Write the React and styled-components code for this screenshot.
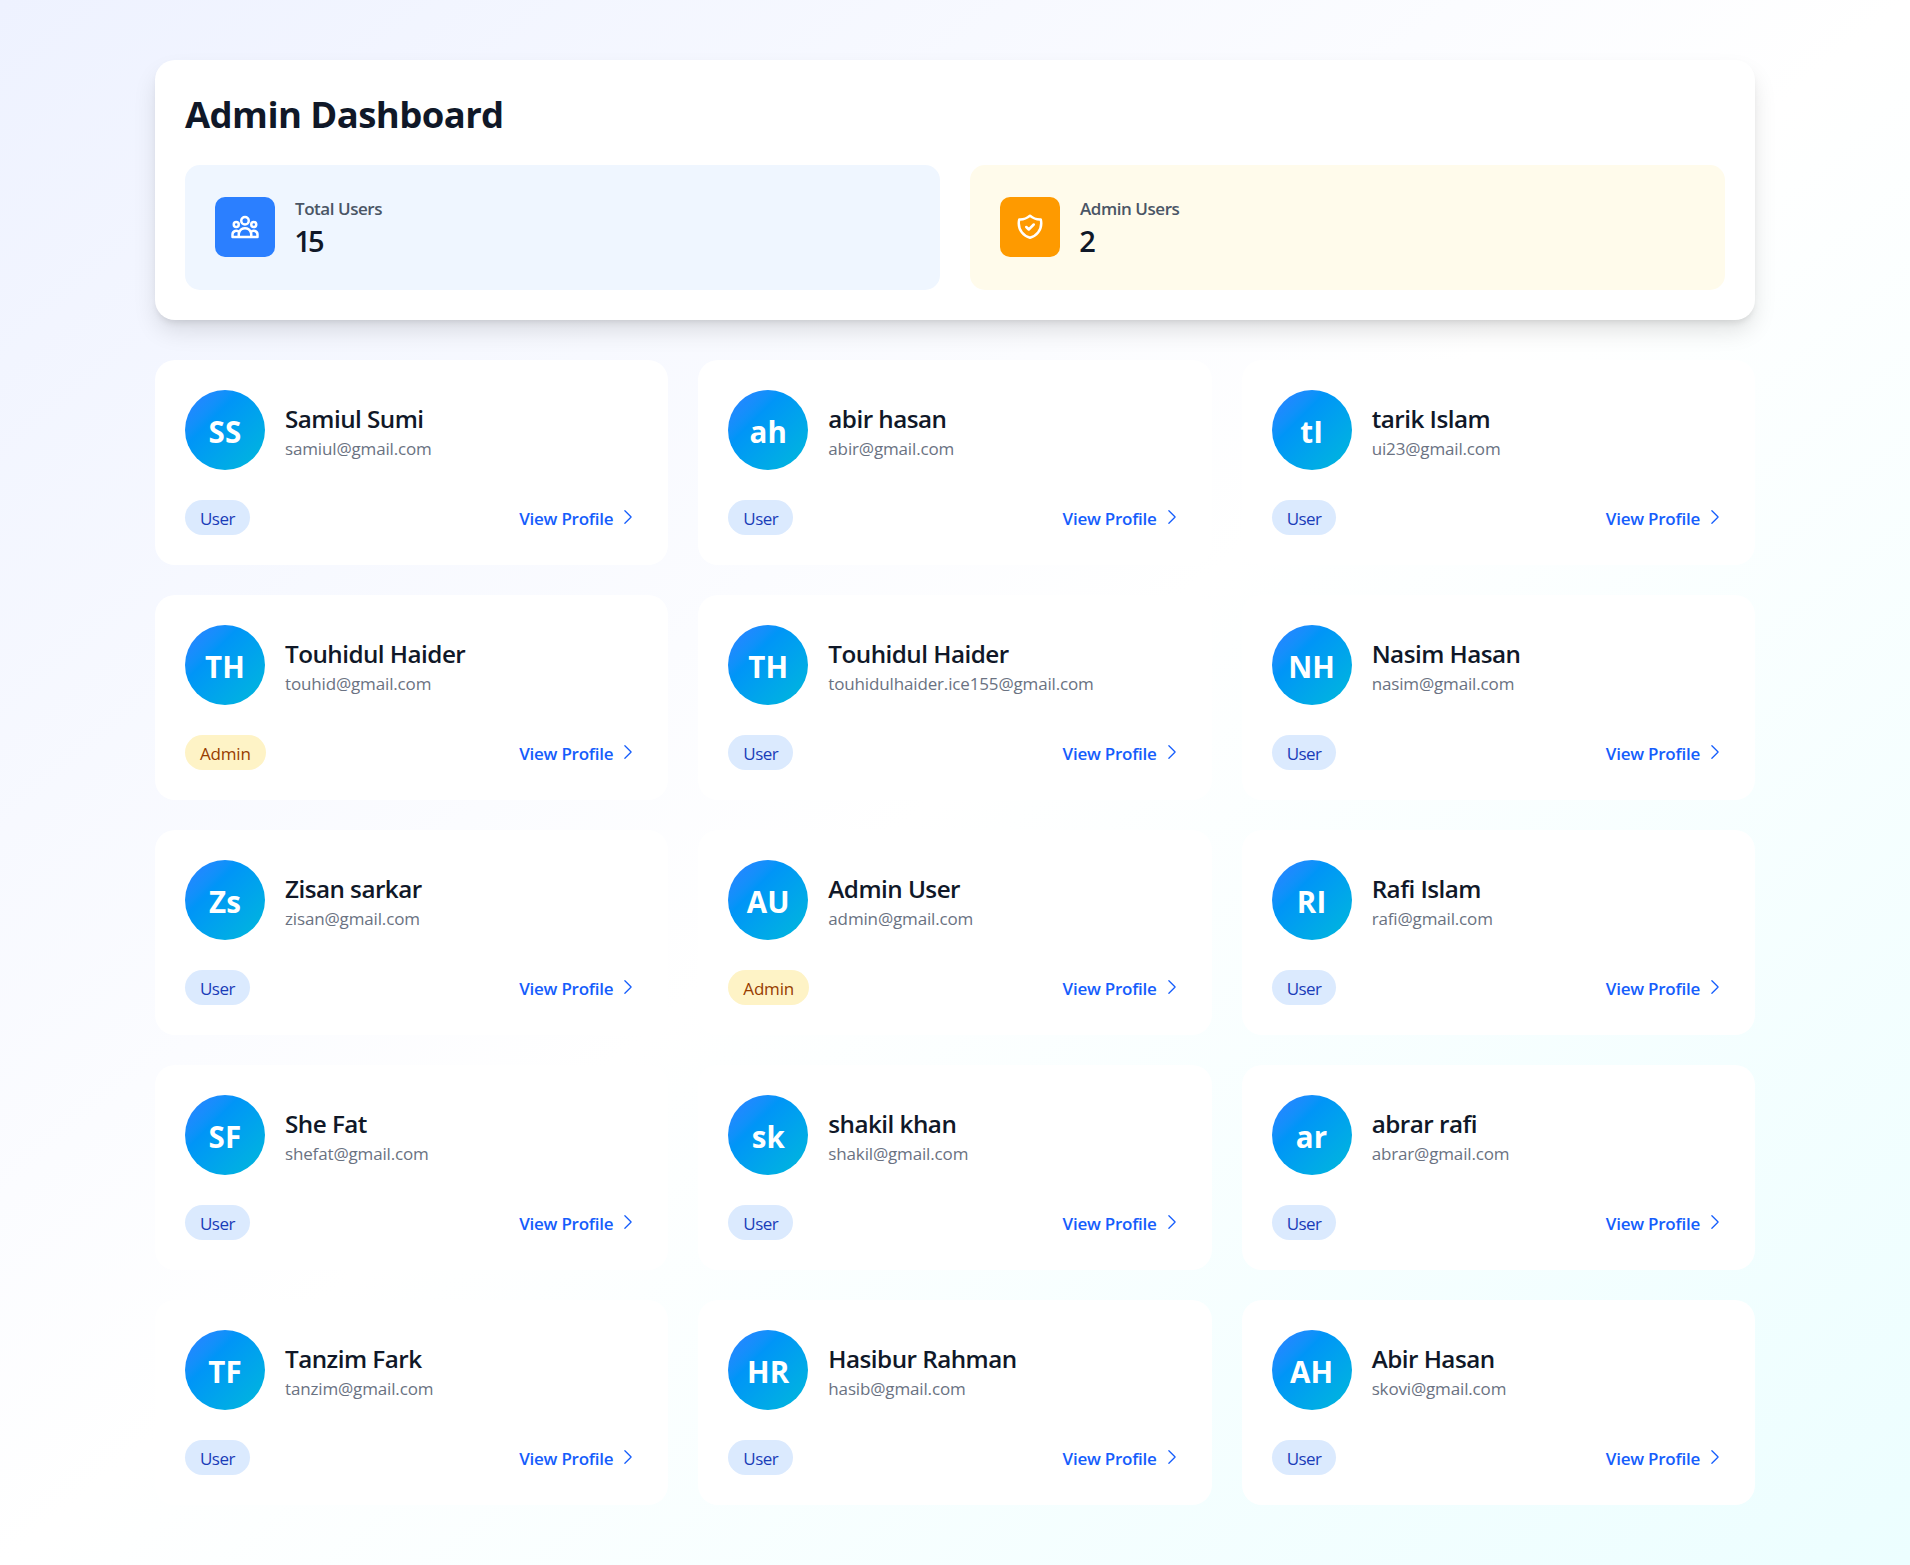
import React from "react";
import styled, { createGlobalStyle, css } from "styled-components";
import { HiOutlineUserGroup, HiOutlineShieldCheck } from "react-icons/hi";

const GlobalStyle = createGlobalStyle`
  *, *::before, *::after { box-sizing: border-box; }
  body {
    margin: 0;
    font-family: "Segoe UI", "Open Sans", "Noto Sans", sans-serif;
    color: #101828;
  }
  h1, h3, p { margin: 0; }
`;

const Page = styled.main`
  min-height: 1565px;
  padding: 60px 0;
  background: linear-gradient(to bottom right in oklab, #eef2ff 0%, #ffffff 50%, #ecfeff 100%);
`;

const Container = styled.div`
  width: 1600px;
  margin: 0 auto;
  display: flex;
  flex-direction: column;
  gap: 40px;
`;

const Header = styled.header`
  padding: 30px;
  border-radius: 20px;
  background: #fff;
  box-shadow: 0 12.5px 25px -2.5px rgba(0, 0, 0, 0.12), 0 5px 7.5px -3.75px rgba(0, 0, 0, 0.1);
`;

const Title = styled.h1`
  padding-top: 2.4px;
  margin-bottom: 27.6px;
  font-size: 36.5px;
  line-height: 45px;
  font-weight: 700;
  letter-spacing: -0.58px;
`;

const Stats = styled.section`
  display: grid;
  grid-template-columns: 1fr 1fr;
  gap: 30px;
`;

const tones = {
  blue: css`
    --surface: #eff6ff;
    --accent: #2b7fff;
  `,
  amber: css`
    --surface: #fffbeb;
    --accent: #fe9a00;
  `,
};

const StatCard = styled.div`
  ${(p) => tones[p.$tone]}
  display: flex;
  align-items: center;
  gap: 20px;
  height: 125px;
  padding: 0 30px;
  border-radius: 15px;
  background: var(--surface);
`;

const StatIcon = styled.span`
  display: grid;
  place-items: center;
  width: 60px;
  height: 60px;
  margin-bottom: 1px;
  border-radius: 10px;
  color: #fff;
  background: var(--accent);
`;

const TextStack = styled.div`
  padding-top: 1.5px;
  margin-bottom: -1.5px;
`;

const StatLabel = styled.p`
  font-size: 17px;
  line-height: 25px;
  font-weight: 600;
  letter-spacing: -0.45px;
  color: #4a5565;
`;

const StatValue = styled.p`
  font-size: 29px;
  line-height: 40px;
  font-weight: 600;
  letter-spacing: -2.8px;
  text-indent: -0.8px;
`;

const UserGrid = styled.section`
  display: grid;
  grid-template-columns: repeat(3, 1fr);
  gap: 30px;
`;

const Card = styled.article`
  position: relative;
  padding: 30px;
  border-radius: 20px;
  background: #fff;
`;

const Identity = styled.div`
  display: flex;
  align-items: center;
  gap: 20px;
  margin-bottom: 30px;
`;

const Avatar = styled.div`
  display: grid;
  place-items: center;
  width: 80px;
  height: 80px;
  padding-top: 4px;
  border-radius: 50%;
  color: #fff;
  font-size: 29.5px;
  line-height: 40px;
  font-weight: 700;
  letter-spacing: 0.2px;
  background: linear-gradient(
    to bottom right in oklab,
    oklch(62.3% 0.214 259.815),
    oklch(71.5% 0.143 215.221)
  );
`;

const Name = styled.h3`
  font-size: 24.25px;
  line-height: 35px;
  font-weight: 600;
  letter-spacing: -0.53px;
`;

const Email = styled.p`
  font-size: 17px;
  line-height: 25px;
  letter-spacing: -0.15px;
  color: #6a7282;
`;

const CardFooter = styled.div`
  display: flex;
  align-items: center;
  justify-content: space-between;
`;

const Badge = styled.span`
  padding: 6.4px 15px 3.6px;
  border-radius: 999px;
  font-size: 17px;
  line-height: 25px;
  letter-spacing: ${(p) => (p.$admin ? "-0.18px" : "-0.55px")};
  color: ${(p) => (p.$admin ? "#973c00" : "#193cb8")};
  background: ${(p) => (p.$admin ? "#fef3c6" : "#dbeafe")};
`;

const ProfileLink = styled.a`
  display: flex;
  align-items: center;
  gap: 5px;
  color: #155dfc;
`;

const LinkText = styled.span`
  padding-top: 2.8px;
  font-size: 17px;
  line-height: 25px;
  font-weight: 600;
  letter-spacing: -0.24px;
`;

const ChevronIcon = styled.svg`
  width: 20px;
  height: 20px;
  fill: none;
  stroke: currentColor;
  stroke-width: 1.5;
  stroke-linecap: round;
  stroke-linejoin: round;
`;

const users = [
  ["Samiul Sumi", "samiul@gmail.com"],
  ["abir hasan", "abir@gmail.com"],
  ["tarik Islam", "ui23@gmail.com"],
  ["Touhidul Haider", "touhid@gmail.com", true],
  ["Touhidul Haider", "touhidulhaider.ice155@gmail.com"],
  ["Nasim Hasan", "nasim@gmail.com"],
  ["Zisan sarkar", "zisan@gmail.com"],
  ["Admin User", "admin@gmail.com", true],
  ["Rafi Islam", "rafi@gmail.com"],
  ["She Fat", "shefat@gmail.com"],
  ["shakil khan", "shakil@gmail.com"],
  ["abrar rafi", "abrar@gmail.com"],
  ["Tanzim Fark", "tanzim@gmail.com"],
  ["Hasibur Rahman", "hasib@gmail.com"],
  ["Abir Hasan", "skovi@gmail.com"],
].map(([name, email, admin = false]) => ({ name, email, admin }));

const initials = (name) => name.split(" ").map((part) => part[0]).join("");

function Stat({ tone, icon: Icon, label, value }) {
  return (
    <StatCard $tone={tone}>
      <StatIcon><Icon size={30} /></StatIcon>
      <TextStack>
        <StatLabel>{label}</StatLabel>
        <StatValue>{value}</StatValue>
      </TextStack>
    </StatCard>
  );
}

function UserCard({ name, email, admin }) {
  return (
    <Card>
      <Identity>
        <Avatar>{initials(name)}</Avatar>
        <TextStack>
          <Name>{name}</Name>
          <Email>{email}</Email>
        </TextStack>
      </Identity>
      <CardFooter>
        <Badge $admin={admin}>{admin ? "Admin" : "User"}</Badge>
        <ProfileLink>
          <LinkText>View Profile</LinkText>
          <ChevronIcon viewBox="0 0 24 24"><path d="M8.25 4.5l7.5 7.5-7.5 7.5" /></ChevronIcon>
        </ProfileLink>
      </CardFooter>
    </Card>
  );
}

export default function App() {
  return (
    <Page>
      <GlobalStyle />
      <Container>
        <Header>
          <Title>Admin Dashboard</Title>
          <Stats>
            <Stat tone="blue" icon={HiOutlineUserGroup} label="Total Users" value={15} />
            <Stat tone="amber" icon={HiOutlineShieldCheck} label="Admin Users" value={2} />
          </Stats>
        </Header>
        <UserGrid>
          {users.map((user) => <UserCard key={user.email} {...user} />)}
        </UserGrid>
      </Container>
    </Page>
  );
}
